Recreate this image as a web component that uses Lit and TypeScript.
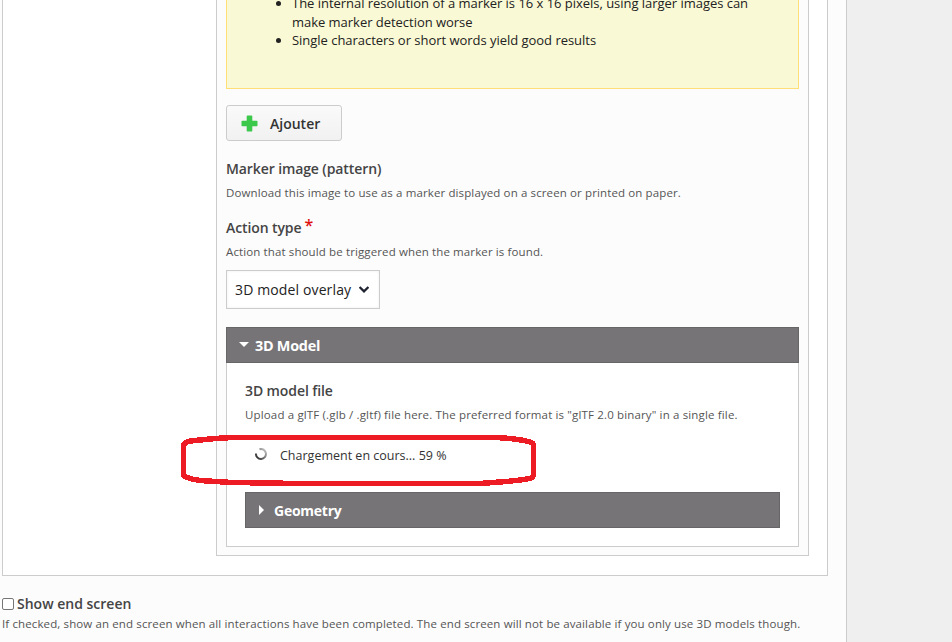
import { LitElement, html, css } from "lit";
import { customElement } from "lit/decorators.js";

@customElement("app-root")
export class AppRoot extends LitElement {
  static styles = css`
    :host { display: block; height: 642px; overflow: hidden; background: #efefef; font-family: "Open Sans", sans-serif; color: #222; position: relative; }
    * { box-sizing: border-box; }
    .page { width: 847px; height: 642px; background: #fcfcfc; border-right: 1px solid #ccc; padding: 0 0 0 2px; overflow: hidden; }
    .outer { width: 826px; height: 576px; background: #fff; border: 1px solid #ccc; border-top: 0; padding: 0 0 0 213px; }
    .inner { width: 593px; height: 556px; background: #fcfcfc; border: 1px solid #ccc; border-top: 0; padding: 0 0 0 9px; }
    .notice { width: 573px; height: 89px; background: #faf9d5; border: 1px solid #ffdf76; border-top: 0; }
    .notice ul { margin: 0; padding: 0 0 0 65px; font-size: 13px; line-height: 18.5px; letter-spacing: -.03px; color: #222; transform: translateY(-6px); width: 540px; }
    .add { display: flex; align-items: center; width: 116px; height: 36px; margin-top: 16px; border: 1px solid #ccc; border-radius: 3px; background: linear-gradient(#fafafa, #f1f1f1); padding-left: 14px; font-size: 14px; font-weight: 600; color: #333; gap: 12px; }
    .add svg { display: block; }
    .label { font-size: 14px; font-weight: 600; color: #444; line-height: 20px; margin: 0; letter-spacing: -.1px; }
    .desc { font-size: 11.5px; color: #555; line-height: 16px; margin: 0; letter-spacing: .12px; white-space: nowrap; }
    .l1 { margin-top: 18px; }
    .d1 { margin-top: 6px; }
    .l2 { margin-top: 17px; position: relative; }
    .star { color: #e01010; font-size: 16px; line-height: 10px; margin-left: 3px; font-weight: 600; vertical-align: 2px; }
    .d2 { margin-top: 6px; }
    .select { display: flex; align-items: center; width: 154px; height: 39px; margin-top: 10px; border: 1px solid #ccc; background: #fff; padding-left: 8px; font-size: 14px; letter-spacing: .13px; color: #222; gap: 8px; box-shadow: inset 0 0 3px #eee; }
    .group { width: 573px; height: 220px; margin-top: 18px; border: 1px solid #ccc; border-top: 0; background: #fff; }
    .bar { display: flex; align-items: center; background: #767477; border: 1px solid #666; color: #fff; font-size: 14.4px; font-weight: 700; height: 36px; letter-spacing: -.25px; }
    .b1 { margin: 0 -1px; padding-left: 12px; gap: 6px; }
    .b2 { width: 535px; height: 36px; margin: 0 0 0 18px; padding-left: 13px; gap: 9px; font-size: 14px; }
    .body { padding: 18px 0 0 18px; }
    .l3 { margin: 0; }
    .d3 { margin-top: 6px; letter-spacing: .15px; }
    .load { display: flex; align-items: center; height: 20px; margin-top: 22px; padding-left: 28px; gap: 13px; font-size: 12.5px; color: #333; }
    .load svg { margin-bottom: 3px; }
    .load + .bar { margin-top: 27px; }
    .end { padding-top: 18px; }
    .check { display: flex; align-items: center; gap: 3px; font-size: 14px; font-weight: 600; color: #444; line-height: 20px; }
    .box { width: 12px; height: 12px; border: 1px solid #767676; border-radius: 2px; background: #fff; flex: none; }
    .d4 { margin-top: 2px; }
    .mark { position: absolute; left: 0; top: 0; pointer-events: none; }
  `;

  render() {
    return html`
      <div class="page">
        <div class="outer">
          <div class="inner">
            <div class="notice">
              <ul>
                <li>The internal resolution of a marker is 16 x 16 pixels, using larger images can make marker detection worse</li>
                <li>Single characters or short words yield good results</li>
              </ul>
            </div>
            <div class="add">
              <svg width="17" height="17" viewBox="0 0 17 17"><path d="M6.5 0.5h4a.8.8 0 0 1 .8.8v4.4h4.4a.8.8 0 0 1 .8.8v4a.8.8 0 0 1-.8.8h-4.4v4.4a.8.8 0 0 1-.8.8h-4a.8.8 0 0 1-.8-.8v-4.4H1.3a.8.8 0 0 1-.8-.8v-4a.8.8 0 0 1 .8-.8h4.4V1.3a.8.8 0 0 1 .8-.8z" fill="#3cc84a"/></svg>
              <span>Ajouter</span>
            </div>
            <p class="label l1">Marker image (pattern)</p>
            <p class="desc d1">Download this image to use as a marker displayed on a screen or printed on paper.</p>
            <p class="label l2">Action type<span class="star">*</span></p>
            <p class="desc d2">Action that should be triggered when the marker is found.</p>
            <div class="select">
              <span>3D model overlay</span>
              <svg width="10" height="7" viewBox="0 0 10 7"><path d="M.6 1l4.4 4.4L9.4 1" fill="none" stroke="#1f2430" stroke-width="2.2"/></svg>
            </div>
            <div class="group">
              <div class="bar b1">
                <svg width="10" height="6" viewBox="0 0 10 6"><path d="M0 0h10L5 5z" fill="#fff"/></svg>
                <span>3D Model</span>
              </div>
              <div class="body">
                <p class="label l3">3D model file</p>
                <p class="desc d3">Upload a glTF (.glb / .gltf) file here. The preferred format is "glTF 2.0 binary" in a single file.</p>
              </div>
              <div class="load">
                <svg width="12" height="12" viewBox="0 0 12 12"><defs><linearGradient id="s" x1="0" y1="1" x2="1" y2="0"><stop offset="0" stop-color="#222"/><stop offset="1" stop-color="#ccc"/></linearGradient></defs><path d="M1 5.5A5 5 0 1 0 4.5 1.2" fill="none" stroke="url(#s)" stroke-width="2"/></svg>
                <span>Chargement en cours... 59 %</span>
              </div>
              <div class="bar b2">
                <svg width="6" height="10" viewBox="0 0 6 10"><path d="M0 0v10l5-5z" fill="#fff"/></svg>
                <span>Geometry</span>
              </div>
            </div>
          </div>
        </div>
        <div class="end">
          <div class="check"><span class="box"></span><span>Show end screen</span></div>
          <p class="desc d4">If checked, show an end screen when all interactions have been completed. The end screen will not be available if you only use 3D models though.</p>
        </div>
      </div>
      <svg class="mark" width="952" height="642" viewBox="0 0 952 642">
        <path d="M183.5 475V446Q184 442 190 441L215 438.5L232 437.5H495Q518 438.5 530 442Q533.5 443 533.5 446V474Q533.5 477 530 478.5Q515 481 500 482L480 483.5H300L232 482.5L200 480.5Q184 478 183.5 475Z" fill="none" stroke="#ed1c24" stroke-width="5.5" shape-rendering="crispEdges"/>
      </svg>
    `;
  }
}
